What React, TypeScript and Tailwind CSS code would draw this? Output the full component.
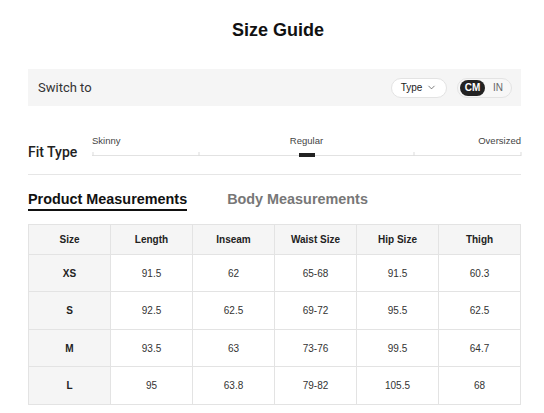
import { ChevronDown } from "lucide-react";

const columns = ["Size", "Length", "Inseam", "Waist Size", "Hip Size", "Thigh"];

const rows = [
  ["XS", "91.5", "62", "65-68", "91.5", "60.3"],
  ["S", "92.5", "62.5", "69-72", "95.5", "62.5"],
  ["M", "93.5", "63", "73-76", "99.5", "64.7"],
  ["L", "95", "63.8", "79-82", "105.5", "68"],
];

const ticks = ["0%", "25%", "75%", "100%"];

export default function App() {
  return (
    <div className="min-h-[413px] w-[544px] bg-white font-['Liberation_Sans',Arial,sans-serif] text-[#222]">
      <div className="ml-[28px] w-[493px]">
        <h1 className="pl-[7px] pt-[18px] text-center text-[18px] font-bold leading-[24px] text-[#111]">Size Guide</h1>

        <div className="mt-[27px] flex h-[37px] items-center justify-between bg-[#f5f5f5] pl-[10px] pr-[9px]">
          <span className="font-['Roboto',sans-serif] text-[13px] text-[#333]">Switch to</span>
          <div className="flex items-center gap-[10px]">
            <button className="flex h-[20px] w-[56px] items-center justify-center gap-[4px] rounded-full border border-[#e3e3e3] bg-white text-[10px] text-[#222]">
              Type
              <ChevronDown className="h-[11px] w-[11px] text-[#444]" strokeWidth={1.5} />
            </button>
            <div className="flex h-[20px] w-[55px] items-center rounded-full border border-[#e3e3e3] bg-[#f7f7f7] px-[2px]">
              <span className="flex h-[16px] w-[25px] items-center justify-center rounded-full bg-[#222] text-[10px] font-bold text-white">
                CM
              </span>
              <span className="ml-[8px] text-[10px] text-[#666]">IN</span>
            </div>
          </div>
        </div>

        <div className="mt-[28px] flex items-start">
          <span className="mt-[10px] w-[64px] font-['Roboto',sans-serif] text-[14px] font-medium leading-[16px] text-[#222]">
            Fit Type
          </span>
          <div className="flex-1">
            <div className="grid grid-cols-3 text-[9.5px] leading-[14px] text-[#444]">
              <span className="text-left">Skinny</span>
              <span className="text-center">Regular</span>
              <span className="text-right">Oversized</span>
            </div>
            <div className="relative mt-[4px] h-[4px] border-b border-[#e2e2e2]">
              {ticks.map((left) => (
                <span
                  key={left}
                  className="absolute bottom-[-1px] h-[4px] w-px -translate-x-1/2 bg-[#dcdcdc]"
                  style={{ left: left === "100%" ? "calc(100% - 0.5px)" : left === "0%" ? "0.5px" : left }}
                />
              ))}
              <span className="absolute left-1/2 top-[1px] h-[4px] w-[16px] -translate-x-1/2 bg-[#222]" />
            </div>
          </div>
        </div>

        <div className="mt-[14px] h-px bg-[#e6e6e6]" />

        <div className="mt-[15px] flex items-start gap-[40px]">
          <span className="border-b-2 border-[#111] pb-[1px] text-[14.4px] font-bold leading-[18px] text-[#111]">
            Product Measurements
          </span>
          <span className="text-[14.4px] font-bold leading-[18px] text-[#777]">Body Measurements</span>
        </div>

        <table className="mt-[13px] w-[493px] table-fixed border-collapse text-center text-[10px]">
          <thead>
            <tr className="h-[30px] bg-[#f5f5f5]">
              {columns.map((col) => (
                <th key={col} className="border border-[#e3e3e3] font-bold text-[#222]">
                  {col}
                </th>
              ))}
            </tr>
          </thead>
          <tbody>
            {rows.map((row, i) => (
              <tr key={row[0]} className={i % 2 === 0 ? "h-[37px]" : "h-[38px]"}>
                {row.map((cell, j) => (
                  <td
                    key={j}
                    className={
                      j === 0
                        ? "border border-[#e3e3e3] bg-[#f5f5f5] font-bold text-[#222]"
                        : "border border-[#e3e3e3] text-[#333]"
                    }
                  >
                    {cell}
                  </td>
                ))}
              </tr>
            ))}
          </tbody>
        </table>
      </div>
    </div>
  );
}
